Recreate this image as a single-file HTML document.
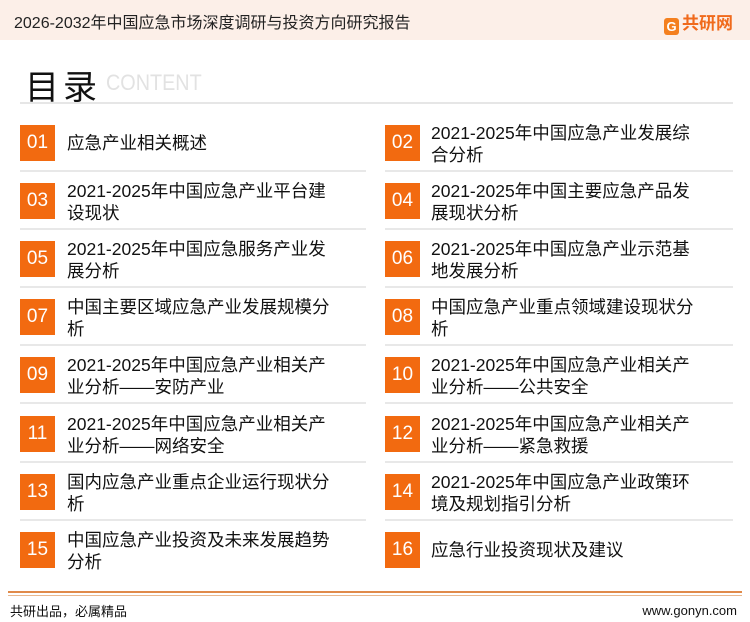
<!DOCTYPE html>
<html><head><meta charset="utf-8"><style>
*{margin:0;padding:0;box-sizing:border-box}
body{width:750px;height:622px;background:#fff;position:relative;overflow:hidden;font-family:"Liberation Sans","Noto Sans CJK SC",sans-serif;color:#111}
.hdr{position:absolute;left:0;top:0;width:750px;height:40px;background:#fcefe8}
.hdr .t{position:absolute;left:14px;top:9px;font-size:16px;color:#222}
.logo{position:absolute;left:664px;top:9px;font-size:17px;font-weight:bold;color:#f06a1c}
.logo span{display:inline-block;width:15px;height:17px;background:#f4801f;border-radius:3px;vertical-align:-2px;margin-right:3px;color:#fff;font-size:13px;text-align:center;line-height:17px}
.ml{position:absolute;left:25px;top:60px;font-size:34px;color:#111;letter-spacing:4px}
.ct{position:absolute;left:106px;top:70px;font-size:22px;color:#e2e2e2;transform:scaleX(.9);transform-origin:left}
.hl{position:absolute;left:20px;top:102px;width:713px;height:2px;background:#e6e6e6}
.box{position:absolute;width:35px;height:36px;background:#f26a10;color:#fff;font-size:19px;text-align:center;line-height:36px}
.tx{position:absolute;font-size:17.5px;line-height:22px;white-space:nowrap}
.ln{position:absolute;height:2px;background:#e8e8e8}
.f1{position:absolute;left:8px;top:591px;width:734px;height:2px;background:#e08a4a}
.f2{position:absolute;left:8px;top:595px;width:734px;height:1px;background:#e8b890}
.fl{position:absolute;left:10px;top:601px;font-size:13px}
.fr{position:absolute;right:13px;top:603px;font-size:13px}
</style></head><body>
<div class="hdr"><div class="t">2026-2032年中国应急市场深度调研与投资方向研究报告</div><div class="logo"><span>G</span>共研网</div></div>
<div class="ml">目录</div><div class="ct">CONTENT</div>
<div class="hl"></div>
<div id="c"></div>
<script>
var L=["应急产业相关概述","2021-2025年中国应急产业平台建|设现状","2021-2025年中国应急服务产业发|展分析","中国主要区域应急产业发展规模分|析","2021-2025年中国应急产业相关产|业分析——安防产业","2021-2025年中国应急产业相关产|业分析——网络安全","国内应急产业重点企业运行现状分|析","中国应急产业投资及未来发展趋势|分析"];
var R=["2021-2025年中国应急产业发展综|合分析","2021-2025年中国主要应急产品发|展现状分析","2021-2025年中国应急产业示范基|地发展分析","中国应急产业重点领域建设现状分|析","2021-2025年中国应急产业相关产|业分析——公共安全","2021-2025年中国应急产业相关产|业分析——紧急救援","2021-2025年中国应急产业政策环|境及规划指引分析","应急行业投资现状及建议"];
var h="";
for(var i=0;i<8;i++){var y=125+58.1*i;
[[20,67,L[i],2*i+1,20,346],[385,431,R[i],2*i+2,385,348]].forEach(function(a){
var n=a[3]<10?"0"+a[3]:""+a[3];var two=a[2].indexOf("|")>=0;var tl=two?y-3:y+7;
h+='<div class="box" style="left:'+a[0]+'px;top:'+y+'px">'+n+'</div>';
h+='<div class="tx" style="left:'+a[1]+'px;top:'+tl+'px">'+a[2].replace("|","<br>")+'</div>';
if(i<7)h+='<div class="ln" style="left:'+a[4]+'px;top:'+(y+45)+'px;width:'+a[5]+'px"></div>';});}
document.getElementById("c").innerHTML=h;
</script>
<div class="f1"></div><div class="f2"></div>
<div class="fl">共研出品，必属精品</div><div class="fr">www.gonyn.com</div>
</body></html>
